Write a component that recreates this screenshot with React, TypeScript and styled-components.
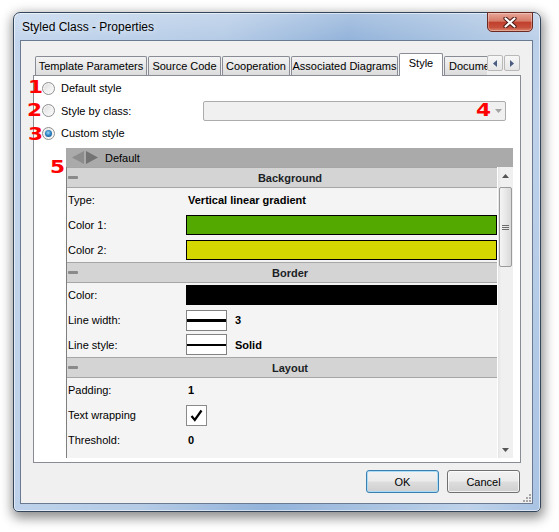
import React from 'react'
import styled, { createGlobalStyle } from 'styled-components'

const GlobalStyle = createGlobalStyle`
  html, body {
    margin: 0;
    padding: 0;
    background: #fff;
  }
  body {
    font-family: 'Liberation Sans', Arial, sans-serif;
    font-size: 11px;
    color: #000;
  }
  * {
    box-sizing: border-box;
  }
`

const Stage = styled.div`
  width: 559px;
  height: 532px;
  padding: 12px 0 0 13px;
`

const Window = styled.div`
  width: 528px;
  height: 500px;
  display: flex;
  flex-direction: column;
  padding: 0 7px 7px 6px;
  border: 1px solid #34465c;
  border-radius: 7px 7px 5px 5px;
  background: linear-gradient(180deg, rgba(255, 255, 255, 0.22) 0, rgba(255, 255, 255, 0) 28px),
    linear-gradient(100deg, #c3d6ed 0%, #b5cbe6 35%, #93b3da 55%, #a8c2e1 72%, #bed2ea 88%, #a9c3e3 100%);
  box-shadow: 1px 4px 12px 2px rgba(0, 0, 0, 0.45), inset 0 0 0 1px rgba(255, 255, 255, 0.55);
`

const TitleBar = styled.div`
  height: 27px;
  display: flex;
  align-items: flex-start;
`

const Title = styled.div`
  flex: 1;
  padding: 7px 0 0 2px;
  font-size: 12px;
  color: #000;
  text-shadow: 0 0 6px rgba(255, 255, 255, 0.9);
`

const CloseButton = styled.div`
  width: 46px;
  height: 20px;
  margin-top: -1px;
  border: 1px solid #6b2a22;
  border-radius: 0 0 5px 5px;
  background: linear-gradient(180deg, #e8a697 0%, #d67a68 45%, #c13f2d 52%, #c64f3b 80%, #dc876d 100%);
  box-shadow: inset 0 0 0 1px rgba(255, 255, 255, 0.3);
  display: flex;
  align-items: center;
  justify-content: center;
`

const Client = styled.div`
  position: relative;
  flex: 1;
  display: flex;
  flex-direction: column;
  background: #f0f0f0;
  border: 1px solid #6a7a90;
  padding: 12px 11px 10px 12px;
`

const TabStrip = styled.div`
  height: 22px;
  display: flex;
  align-items: flex-start;
  padding-left: 2px;
`

const TabViewport = styled.div`
  position: relative;
  z-index: 1;
  width: 452px;
  height: 23px;
  display: flex;
  align-items: flex-end;
  overflow: hidden;
`

const Tab = styled.div<{ $w: number; $active?: boolean }>`
  flex: none;
  width: ${p => p.$w}px;
  height: ${p => (p.$active ? 23 : 19)}px;
  margin: 0 1px ${p => (p.$active ? 0 : 1)}px 0;
  border: 1px solid #898c95;
  border-bottom: none;
  border-radius: 2px 2px 0 0;
  background: ${p => (p.$active ? '#fff' : 'linear-gradient(180deg, #f3f3f3 0%, #e7e7e7 55%, #dcdcdc 100%)')};
  display: flex;
  align-items: center;
  justify-content: center;
  padding-bottom: ${p => (p.$active ? 4 : 0)}px;
  white-space: nowrap;
  font-size: 11px;
`

const TabArrows = styled.div`
  display: flex;
  gap: 1px;
  margin-top: 2px;
`

const TabArrow = styled.div`
  width: 16px;
  height: 16px;
  border: 1px solid #b8b8b8;
  border-radius: 2px;
  background: linear-gradient(180deg, #f7f7f7, #e6e6e6);
  display: flex;
  align-items: center;
  justify-content: center;
`

const Panel = styled.div`
  position: relative;
  flex: 1;
  display: flex;
  flex-direction: column;
  background: #fff;
  border: 1px solid #898c95;
  padding-top: 1px;
`

const RadioRow = styled.div`
  height: 22.5px;
  display: flex;
  align-items: center;
  padding-left: 8px;
`

const RadioCircle = styled.span<{ $checked?: boolean }>`
  flex: none;
  width: 13px;
  height: 13px;
  border-radius: 50%;
  border: 1px solid #8e8f8f;
  background: linear-gradient(135deg, #d9d9d9 0%, #f0f0f0 55%, #fbfbfb 100%);
  box-shadow: inset 0 0 0 1px #f8f8f8;
  display: flex;
  align-items: center;
  justify-content: center;

  &::after {
    content: '';
    display: ${p => (p.$checked ? 'block' : 'none')};
    width: 7px;
    height: 7px;
    border-radius: 50%;
    background: radial-gradient(circle at 45% 40%, #9ad8f7 0, #2f86c6 45%, #0d3f76 100%);
  }
`

const RadioLabel = styled.span`
  margin-left: 6px;
`

const Combo = styled.div`
  width: 303px;
  height: 20px;
  margin: 0 14px 0 auto;
  border: 1px solid #acacac;
  border-radius: 2px;
  background: #f0f0f0;
  display: flex;
  align-items: center;
  justify-content: flex-end;
  padding-right: 3px;
`

const Annot = styled.span<{ $x: number; $y: number }>`
  position: absolute;
  left: ${p => p.$x}px;
  top: ${p => p.$y}px;
  font-family: 'DejaVu Sans', 'Liberation Sans', sans-serif;
  font-weight: bold;
  font-size: 18px;
  line-height: 18px;
  color: #f00;
  transform: scaleX(1.2);
  transform-origin: left top;
`

const Grid = styled.div`
  height: 310px;
  margin: 3.5px 7px 0 32px;
  display: flex;
  flex-direction: column;
`

const GridHeader = styled.div`
  height: 19px;
  flex: none;
  background: #aaaaaa;
  display: flex;
  align-items: center;
  padding-left: 6px;
  gap: 7px;
  font-size: 11px;
`

const GridBody = styled.div`
  flex: 1;
  display: flex;
  border-left: 1px solid #7f7f7f;
  min-height: 0;
`

const GridRows = styled.div`
  flex: 1;
  background: #f4f4f4;
  overflow: hidden;
`

const Category = styled.div`
  height: 21px;
  display: flex;
  align-items: center;
  background: #d4d4d4;
  border-top: 1px solid #a6a6a6;
  border-bottom: 1px solid #a6a6a6;
`

const Minus = styled.span`
  width: 10px;
  height: 3px;
  margin-left: 1px;
  border-radius: 1px;
  background: #8a8a8a;
`

const CategoryTitle = styled.span`
  flex: 1;
  margin-left: 5px;
  text-align: center;
  font-weight: bold;
  color: #1b1f26;
`

const Row = styled.div`
  height: 24.7px;
  display: grid;
  grid-template-columns: 119px 1fr;
  align-items: center;
`

const Label = styled.span`
  padding-left: 1px;
  white-space: nowrap;
`

const Value = styled.div`
  display: flex;
  align-items: center;
`

const BoldText = styled.span`
  padding-left: 2px;
  font-weight: bold;
`

const Swatch = styled.div<{ $color: string }>`
  width: 100%;
  height: 20px;
  border: 1px solid #000;
  background: ${p => p.$color};
`

const LineBox = styled.div`
  width: 41px;
  height: 21px;
  border: 1px solid #828282;
  background: #fff;
  display: flex;
  align-items: center;
  margin-right: 6px;
`

const LineSample = styled.div<{ $t: number }>`
  width: 100%;
  height: ${p => p.$t}px;
  background: #000;
`

const CheckBox = styled.div`
  width: 21px;
  height: 21px;
  border: 1px solid #8a8a8a;
  background: #fff;
  display: flex;
  align-items: center;
  justify-content: center;
`

const ScrollBar = styled.div`
  width: 16px;
  flex: none;
  border-left: 1px solid #fff;
  background: linear-gradient(90deg, #e4e4e4 0, #f0f0f0 3px, #f0f0f0 100%);
  display: flex;
  flex-direction: column;
  align-items: center;
`

const ScrollArrow = styled.div`
  height: 17px;
  width: 100%;
  flex: none;
  display: flex;
  align-items: center;
  justify-content: center;
`

const Thumb = styled.div`
  width: 13px;
  height: 80px;
  margin-top: 3px;
  border: 1px solid #9a9a9a;
  border-radius: 2px;
  background: linear-gradient(90deg, #f4f4f4 0%, #e8e8e8 50%, #d9d9d9 100%);
  display: flex;
  align-items: center;
  justify-content: center;
`

const ScrollSpacer = styled.div`
  flex: 1;
`

const ButtonRow = styled.div`
  height: 23px;
  margin-top: 7px;
  display: flex;
  justify-content: flex-end;
  gap: 8px;
  padding-right: 1px;
`

const DialogButton = styled.button<{ $default?: boolean }>`
  width: 73px;
  height: 23px;
  padding: 0;
  border: 1px solid ${p => (p.$default ? '#3c7fb1' : '#707070')};
  border-radius: 3px;
  background: linear-gradient(180deg, #f2f2f2 0%, #ebebeb 48%, #dddddd 52%, #cfcfcf 100%);
  box-shadow: inset 0 0 0 1px ${p => (p.$default ? '#a9dcf5' : 'rgba(255,255,255,0.7)')};
  font-family: 'Liberation Sans', Arial, sans-serif;
  font-size: 11px;
  color: #000;
`

const Grip = styled.svg`
  position: absolute;
  right: 1px;
  bottom: 1px;
`

type Prop =
  | { label: string; kind: 'text'; text: string }
  | { label: string; kind: 'color'; color: string }
  | { label: string; kind: 'line'; thickness: number; text: string }
  | { label: string; kind: 'check' }

const sections: { title: string; rows: Prop[] }[] = [
  {
    title: 'Background',
    rows: [
      { label: 'Type:', kind: 'text', text: 'Vertical linear gradient' },
      { label: 'Color 1:', kind: 'color', color: '#53a900' },
      { label: 'Color 2:', kind: 'color', color: '#d5d800' },
    ],
  },
  {
    title: 'Border',
    rows: [
      { label: 'Color:', kind: 'color', color: '#000' },
      { label: 'Line width:', kind: 'line', thickness: 3, text: '3' },
      { label: 'Line style:', kind: 'line', thickness: 2, text: 'Solid' },
    ],
  },
  {
    title: 'Layout',
    rows: [
      { label: 'Padding:', kind: 'text', text: '1' },
      { label: 'Text wrapping', kind: 'check' },
      { label: 'Threshold:', kind: 'text', text: '0' },
    ],
  },
]

const tabs = [
  { name: 'Template Parameters', w: 112 },
  { name: 'Source Code', w: 73 },
  { name: 'Cooperation', w: 68 },
  { name: 'Associated Diagrams', w: 107 },
  { name: 'Style', w: 44, active: true },
  { name: 'Documentation', w: 84 },
]

const renderValue = (p: Prop) => {
  switch (p.kind) {
    case 'text':
      return <BoldText>{p.text}</BoldText>
    case 'color':
      return <Swatch $color={p.color} />
    case 'line':
      return (
        <>
          <LineBox>
            <LineSample $t={p.thickness} />
          </LineBox>
          <BoldText>{p.text}</BoldText>
        </>
      )
    case 'check':
      return (
        <CheckBox>
          <svg width="13" height="13" viewBox="0 0 13 13">
            <path d="M1.5 7 L4.8 11 L11.5 1.5" fill="none" stroke="#000" strokeWidth="2.2" />
          </svg>
        </CheckBox>
      )
  }
}

export default function App() {
  return (
    <Stage>
      <GlobalStyle />
      <Window>
        <TitleBar>
          <Title>Styled Class - Properties</Title>
          <CloseButton>
            <svg width="14" height="11" viewBox="0 0 14 11">
              <path d="M2.5 1.5 L11.5 9.5 M11.5 1.5 L2.5 9.5" stroke="#4a1a14" strokeWidth="4.2" strokeLinecap="round" />
              <path d="M2.5 1.5 L11.5 9.5 M11.5 1.5 L2.5 9.5" stroke="#fff" strokeWidth="2.2" strokeLinecap="round" />
            </svg>
          </CloseButton>
        </TitleBar>
        <Client>
          <TabStrip>
            <TabViewport>
              {tabs.map(t => (
                <Tab key={t.name} $w={t.w} $active={t.active}>
                  {t.name}
                </Tab>
              ))}
            </TabViewport>
            <TabArrows>
              <TabArrow>
                <svg width="4" height="7" viewBox="0 0 4 7">
                  <path d="M4 0 L0 3.5 L4 7 Z" fill="#4a5d80" />
                </svg>
              </TabArrow>
              <TabArrow>
                <svg width="4" height="7" viewBox="0 0 4 7">
                  <path d="M0 0 L4 3.5 L0 7 Z" fill="#4a5d80" />
                </svg>
              </TabArrow>
            </TabArrows>
          </TabStrip>
          <Panel>
            <RadioRow>
              <RadioCircle />
              <RadioLabel>Default style</RadioLabel>
            </RadioRow>
            <RadioRow>
              <RadioCircle />
              <RadioLabel>Style by class:</RadioLabel>
              <Combo>
                <svg width="7" height="4" viewBox="0 0 7 4">
                  <path d="M0 0 L7 0 L3.5 4 Z" fill="#a3a3a3" />
                </svg>
              </Combo>
            </RadioRow>
            <RadioRow>
              <RadioCircle $checked />
              <RadioLabel>Custom style</RadioLabel>
            </RadioRow>
            <Grid>
              <GridHeader>
                <svg width="26" height="13" viewBox="0 0 26 13">
                  <path d="M12 0 L12 13 L0 6.5 Z" fill="#8c8c8c" />
                  <path d="M14 0 L26 6.5 L14 13 Z" fill="#737373" />
                </svg>
                <span>Default</span>
              </GridHeader>
              <GridBody>
                <GridRows>
                  {sections.map(s => (
                    <React.Fragment key={s.title}>
                      <Category>
                        <Minus />
                        <CategoryTitle>{s.title}</CategoryTitle>
                      </Category>
                      {s.rows.map(r => (
                        <Row key={r.label}>
                          <Label>{r.label}</Label>
                          <Value>{renderValue(r)}</Value>
                        </Row>
                      ))}
                    </React.Fragment>
                  ))}
                </GridRows>
                <ScrollBar>
                  <ScrollArrow>
                    <svg width="7" height="4" viewBox="0 0 7 4">
                      <path d="M0 4 L3.5 0 L7 4 Z" fill="#555" />
                    </svg>
                  </ScrollArrow>
                  <Thumb>
                    <svg width="7" height="7" viewBox="0 0 7 7">
                      <path d="M0 1.5 H7 M0 3.5 H7 M0 5.5 H7" stroke="#6d6d6d" strokeWidth="1" />
                    </svg>
                  </Thumb>
                  <ScrollSpacer />
                  <ScrollArrow>
                    <svg width="7" height="4" viewBox="0 0 7 4">
                      <path d="M0 0 L7 0 L3.5 4 Z" fill="#555" />
                    </svg>
                  </ScrollArrow>
                </ScrollBar>
              </GridBody>
            </Grid>
            <Annot $x={-6} $y={2}>1</Annot>
            <Annot $x={-7} $y={25}>2</Annot>
            <Annot $x={-6} $y={49}>3</Annot>
            <Annot $x={442} $y={25}>4</Annot>
            <Annot $x={16} $y={82}>5</Annot>
          </Panel>
          <ButtonRow>
            <DialogButton $default>OK</DialogButton>
            <DialogButton>Cancel</DialogButton>
          </ButtonRow>
          <Grip width="8" height="8" viewBox="0 0 8 8">
            <g fill="#a6a6a6">
              <rect x="6" y="0" width="2" height="2" />
              <rect x="3" y="3" width="2" height="2" />
              <rect x="6" y="3" width="2" height="2" />
              <rect x="0" y="6" width="2" height="2" />
              <rect x="3" y="6" width="2" height="2" />
              <rect x="6" y="6" width="2" height="2" />
            </g>
          </Grip>
        </Client>
      </Window>
    </Stage>
  )
}
